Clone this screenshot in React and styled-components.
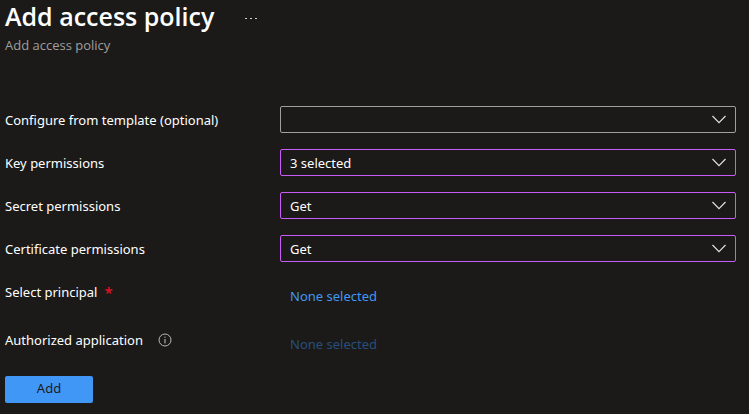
import React from "react";
import styled, { createGlobalStyle } from "styled-components";

const GlobalStyle = createGlobalStyle`
  *, *::before, *::after { box-sizing: border-box; }
  body {
    margin: 0;
    background: #1b1a19;
    color: #ffffff;
    font-family: "Segoe UI", "Noto Sans", "Open Sans", sans-serif;
    font-size: 13px;
    line-height: 18px;
  }
`;

const Page = styled.main`
  padding: 0 13px 11px 5px;
`;

const Header = styled.header`
  padding-bottom: 52px;
`;

const TitleRow = styled.div`
  display: flex;
  align-items: center;
  gap: 30px;
  height: 36px;
`;

const Title = styled.h1`
  margin: 0;
  padding-bottom: 4px;
  font-family: "Segoe UI", "Open Sans", sans-serif;
  font-size: 25px;
  line-height: 32px;
  font-weight: 600;
`;

const MoreButton = styled.button`
  display: flex;
  padding: 0;
  border: 0;
  background: none;
  color: #d2d0ce;
  cursor: pointer;
`;

const Subtitle = styled.p`
  margin: 0;
  color: #a19f9d;
  font-family: "Segoe UI", "Open Sans", sans-serif;
  font-size: 13px;
`;

const Form = styled.form`
  display: flex;
  flex-direction: column;
  gap: 16px;
`;

const Field = styled.div`
  display: grid;
  grid-template-columns: 275px minmax(0, 1fr);
  align-items: center;
  min-height: 27px;
`;

const PickerField = styled(Field)`
  align-items: start;
  padding-top: 5px;
  min-height: 32px;
`;

const LabelGroup = styled.div`
  display: flex;
  align-items: center;
  gap: ${({ $gap }) => $gap || "7px"};
`;

const Required = styled.span`
  color: #e81123;
  font-size: 15px;
  font-weight: 500;
`;

const InfoButton = styled.button`
  display: flex;
  padding: 0;
  border: 0;
  background: none;
  color: #c8c6c4;
`;

const SelectFrame = styled.div`
  display: grid;
  grid-template-columns: minmax(0, 1fr) 24px;
  align-items: center;

  svg {
    grid-area: 1 / 2;
    pointer-events: none;
  }
`;

const Select = styled.select`
  grid-area: 1 / 1 / 2 / 3;
  appearance: none;
  width: 100%;
  height: 27px;
  margin: 0;
  padding: 0 32px 0 9px;
  border: 1px solid ${({ $changed }) => ($changed ? "#c95cf5" : "#a19f9d")};
  border-radius: 2px;
  background: #1b1a19;
  color: inherit;
  font: inherit;
`;

const Picker = styled.a`
  justify-self: start;
  margin: 4px 0 0 10px;
  color: ${({ $disabled }) => ($disabled ? "#264f7c" : "#4197f5")};
  text-decoration: none;
`;

const Actions = styled.footer`
  padding-top: 2px;
`;

const AddButton = styled.button`
  width: 88px;
  height: 27px;
  padding: 0 0 3px;
  border: 0;
  border-radius: 2px;
  background: #4197f5;
  color: #1b1a19;
  font: inherit;
  cursor: pointer;
`;

const Chevron = () => (
  <svg width="14" height="10" viewBox="0 0 14 10" fill="none" aria-hidden="true">
    <path d="M0.5 1 L7 7.7 L13.5 1" stroke="#e1dfdd" strokeWidth="1.2" />
  </svg>
);

const MoreIcon = () => (
  <svg width="14" height="4" viewBox="0 0 14 4" fill="currentColor" aria-hidden="true">
    <rect x="1" y="2" width="2" height="1" />
    <rect x="6" y="2" width="2" height="1" />
    <rect x="11" y="2" width="2" height="1" />
  </svg>
);

const InfoIcon = () => (
  <svg width="14" height="14" viewBox="0 0 14 14" fill="none" stroke="currentColor" aria-hidden="true">
    <circle cx="7" cy="7" r="6" strokeWidth="0.9" />
    <path d="M7 6v4.4M7 3.6v1.1" />
  </svg>
);

const selects = [
  { id: "template", label: "Configure from template (optional)", value: "" },
  { id: "key", label: "Key permissions", value: "3 selected" },
  { id: "secret", label: "Secret permissions", value: "Get" },
  { id: "certificate", label: "Certificate permissions", value: "Get" },
];

export default function App() {
  return (
    <>
      <GlobalStyle />
      <Page>
        <Header>
          <TitleRow>
            <Title>Add access policy</Title>
            <MoreButton type="button" aria-label="More actions">
              <MoreIcon />
            </MoreButton>
          </TitleRow>
          <Subtitle>Add access policy</Subtitle>
        </Header>
        <Form onSubmit={(event) => event.preventDefault()}>
          {selects.map(({ id, label, value }) => (
            <Field key={id}>
              <label htmlFor={id}>{label}</label>
              <SelectFrame>
                <Select id={id} $changed={value !== ""} defaultValue={value}>
                  <option value={value}>{value}</option>
                </Select>
                <Chevron />
              </SelectFrame>
            </Field>
          ))}
          <PickerField>
            <LabelGroup>
              <span id="principal-label">Select principal</span>
              <Required>*</Required>
            </LabelGroup>
            <Picker href="#principal" aria-labelledby="principal-label principal-value">
              <span id="principal-value">None selected</span>
            </Picker>
          </PickerField>
          <PickerField>
            <LabelGroup $gap="15px">
              <span id="application-label">Authorized application</span>
              <InfoButton type="button" aria-label="About authorized application">
                <InfoIcon />
              </InfoButton>
            </LabelGroup>
            <Picker $disabled aria-disabled="true" role="link" aria-labelledby="application-label application-value">
              <span id="application-value">None selected</span>
            </Picker>
          </PickerField>
          <Actions>
            <AddButton type="submit">Add</AddButton>
          </Actions>
        </Form>
      </Page>
    </>
  );
}
